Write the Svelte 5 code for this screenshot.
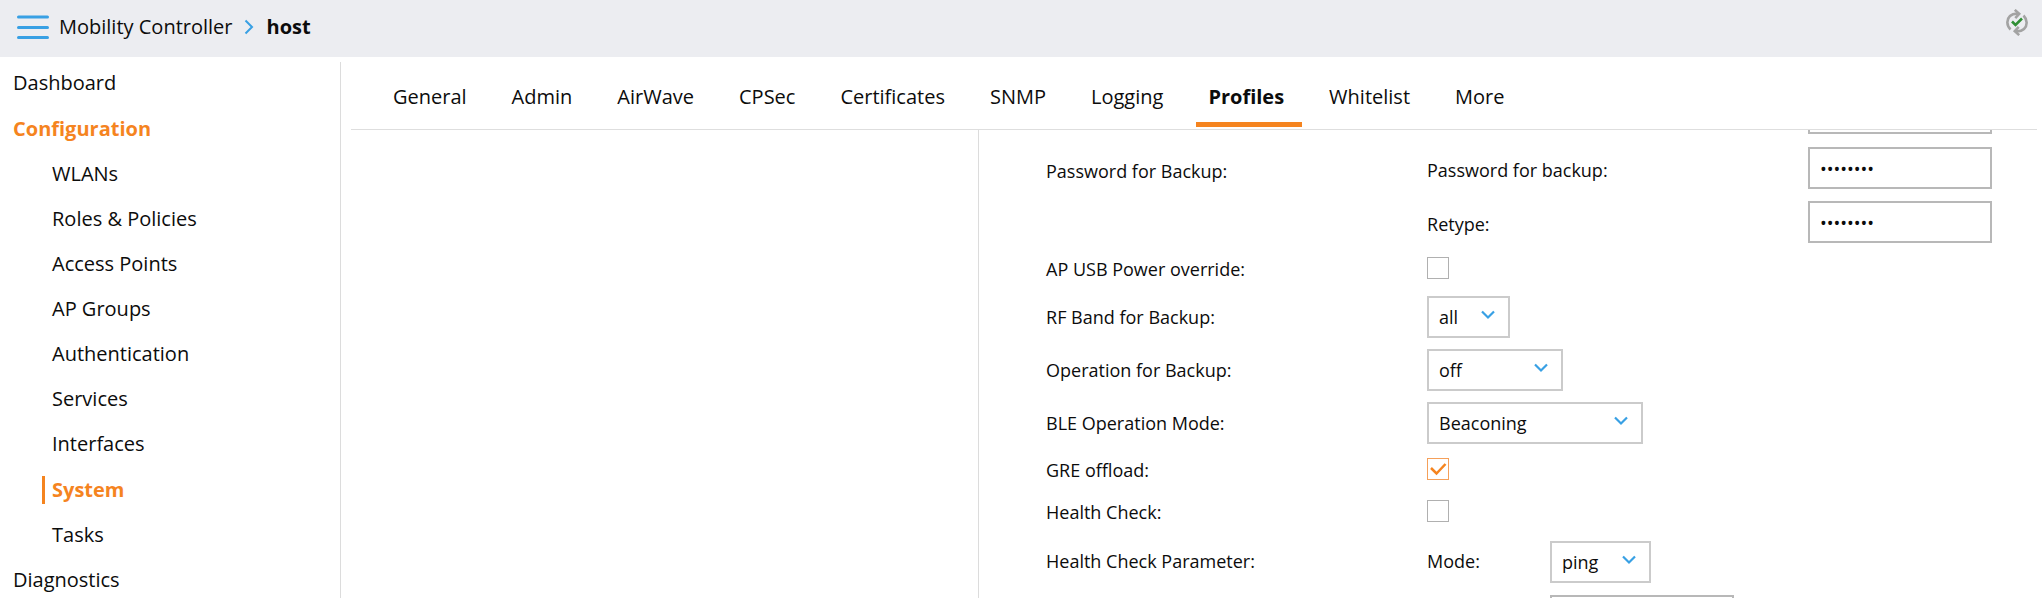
<script>
  const sections = [
    { label: 'Dashboard' },
    { label: 'Configuration', active: true },
    { label: 'WLANs', child: true },
    { label: 'Roles & Policies', child: true },
    { label: 'Access Points', child: true },
    { label: 'AP Groups', child: true },
    { label: 'Authentication', child: true },
    { label: 'Services', child: true },
    { label: 'Interfaces', child: true },
    { label: 'System', child: true, active: true },
    { label: 'Tasks', child: true },
    { label: 'Diagnostics' }
  ];
  const tabs = ['General', 'Admin', 'AirWave', 'CPSec', 'Certificates', 'SNMP', 'Logging', 'Profiles', 'Whitelist', 'More'];
  let current = $state('Profiles');

  const fields = [
    { id: 'usb', label: 'AP USB Power override:', type: 'check', checked: false },
    { id: 'band', label: 'RF Band for Backup:', type: 'select', value: 'all', size: 'short' },
    { id: 'operation', label: 'Operation for Backup:', type: 'select', value: 'off', size: 'medium' },
    { id: 'ble', label: 'BLE Operation Mode:', type: 'select', value: 'Beaconing', size: 'long' },
    { id: 'gre', label: 'GRE offload:', type: 'check', checked: true },
    { id: 'health', label: 'Health Check:', type: 'check', checked: false }
  ];
</script>

<div class="page">
  <header>
    <button class="menu" aria-label="Menu">
      <svg width="34" height="26" viewBox="0 0 34 26" fill="none" stroke="#38a0e4" stroke-width="3" stroke-linecap="round">
        <path d="M2.500 3H31.500M2.500 13.500H31.500M2.500 23.500H31.500" />
      </svg>
    </button>
    <nav class="crumbs" aria-label="Breadcrumb">
      <a href="#controller">Mobility Controller</a>
      <svg width="10" height="16" viewBox="0 0 10 16" fill="none" stroke="#38a0e4" stroke-width="2">
        <path d="M1.500 1.500L8 8L1.500 14.500" />
      </svg>
      <strong>host</strong>
    </nav>
    <button class="sync" aria-label="Synchronize">
      <svg width="22" height="27" viewBox="0 0 22 27" fill="none" stroke="#a3a3a3" stroke-width="2.600">
        <path d="M4.500 20.500C0.500 16.500 0.300 10.500 4 7C6.300 4.900 9 4.300 13 4.800" />
        <path d="M17.500 6.500C21.500 10.500 21.700 16.500 18 20C15.700 22.100 13 22.700 9 22.200" />
        <path d="M8.800 0.900L13.200 4.900L9.300 9.200" />
        <path d="M13.200 26.100L8.800 22.100L12.700 17.800" />
        <path d="M6 12.500L9.500 16L16 9.500" stroke="#2f8f35" />
      </svg>
    </button>
  </header>

  <div class="body">
    <nav class="side" aria-label="Main">
      {#each sections as item}
        <a href="#{item.label}" class:child={item.child} class:active={item.active}><span>{item.label}</span></a>
      {/each}
    </nav>

    <main>
      <div class="tabs" role="tablist">
        {#each tabs as tab}
          <button role="tab" aria-selected={tab === current} class:on={tab === current} onclick={() => (current = tab)}>{tab}</button>
        {/each}
      </div>

      <div class="split">
        <div class="tree"></div>
        <form>
          <div class="row group before">
            <input class="third" type="text" aria-label="Backup value" />
          </div>

          <div class="row group">
            <span class="label">Password for Backup:</span>
            <div class="pair">
              <label for="pw">Password for backup:</label>
              <input id="pw" type="password" value="password" />
              <label for="pw2">Retype:</label>
              <input id="pw2" type="password" value="password" />
            </div>
          </div>

          {#each fields as field}
            <div class="row {field.type}">
              <label for={field.id}>{field.label}</label>
              {#if field.type === 'check'}
                <input id={field.id} type="checkbox" checked={field.checked} />
              {:else}
                <select id={field.id} class={field.size}><option>{field.value}</option></select>
              {/if}
            </div>
          {/each}

          <div class="row group health">
            <span class="label">Health Check Parameter:</span>
            <div class="params">
              <label for="mode">Mode:</label>
              <select id="mode" class="mode"><option>ping</option></select>
              <input class="second" type="text" aria-label="Packet size" />
            </div>
          </div>
        </form>
      </div>
    </main>
  </div>
</div>

<style>
  :global(body) {
    background: #fff;
  }
  .page,
  .page * {
    box-sizing: border-box;
  }
  .page {
    height: 100vh;
    display: flex;
    flex-direction: column;
    overflow: hidden;
    font: 20px/28px 'Open Sans', sans-serif;
    color: #0c0c0c;
  }
  button,
  input,
  select {
    font: inherit;
    color: inherit;
    margin: 0;
  }
  button {
    background: none;
    border: 0;
    padding: 0;
    cursor: pointer;
  }
  a {
    color: inherit;
    text-decoration: none;
  }
  svg {
    display: block;
  }

  header {
    flex: none;
    height: 57px;
    padding: 0 14px 3px 16px;
    display: flex;
    align-items: center;
    background: #ecedf1;
  }
  .crumbs {
    display: flex;
    align-items: center;
    gap: 12px;
    margin-left: 9px;
  }
  .sync {
    margin: 0 0 10px auto;
  }

  .body {
    flex: 1;
    min-height: 0;
    display: flex;
    padding: 5px 5px 0 0;
  }
  .side {
    flex: none;
    width: 341px;
    border-right: 1px solid #dcdcdc;
    overflow: hidden;
  }
  .side a {
    display: flex;
    align-items: center;
    height: 45px;
    padding: 0 0 4px 13px;
  }
  .side .child {
    padding-left: 42px;
  }
  .side .child span {
    padding-left: 7px;
    border-left: 3px solid transparent;
  }
  .side .active {
    margin-top: 1px;
    color: #f5841f;
    font-weight: 700;
  }
  .side .child.active span {
    border-left-color: #f5841f;
  }

  main {
    flex: 1;
    min-width: 0;
    margin-left: 10px;
    display: flex;
    flex-direction: column;
  }
  .tabs {
    flex: none;
    display: flex;
    gap: 15px;
    height: 68px;
    padding: 5px 0 2px 30px;
    border-bottom: 1px solid #dedede;
  }
  .tabs button {
    padding: 4px 18px 0 12px;
    border-bottom: 5px solid transparent;
  }
  .tabs .on {
    font-weight: 700;
    border-bottom-color: #f5841f;
  }

  .split {
    flex: 1;
    min-height: 0;
    display: flex;
  }
  .tree {
    width: 37.25%;
    border-right: 1px solid #dcdcdc;
  }
  form {
    flex: 1;
    padding-left: 67px;
    overflow: hidden;
    font-size: 18px;
    line-height: 24px;
  }
  .row {
    display: grid;
    grid-template-columns: 381fr 610fr;
    align-items: start;
  }
  .pair {
    display: grid;
    grid-template-columns: 381fr 229fr;
    row-gap: 12px;
    align-items: start;
  }
  .params {
    display: grid;
    grid-template-columns: 123px auto;
    justify-content: start;
    justify-items: start;
    row-gap: 12px;
  }
  .group {
    padding: 8px 0 5px;
  }
  .group .label {
    padding-top: 12px;
  }
  .group label {
    padding-top: 11px;
  }
  .health .label,
  .health label {
    padding-top: 8px;
  }
  .before {
    grid-template-columns: 381fr 381fr 229fr;
    margin-top: -38px;
    padding-top: 0;
  }
  .third {
    grid-column: 3;
  }
  .second {
    grid-column: 2;
  }
  .check {
    height: 42px;
    padding-top: 9px;
  }
  .select {
    padding: 6px 0 5px;
  }
  .select label {
    padding-top: 9px;
  }

  input,
  select {
    appearance: none;
    height: 42px;
    border: 2px solid #cbcbcb;
    border-radius: 0;
    background: #fff;
  }
  input {
    width: 184px;
    padding: 2px 10px 0;
    border-color: #b8b8b8;
  }
  select {
    padding: 0 36px 0 10px;
    background: #fff url("data:image/svg+xml,%3Csvg xmlns='http://www.w3.org/2000/svg' width='14' height='10' fill='none' stroke='%2338a0e4' stroke-width='2.200'%3E%3Cpath d='M1 1.500L7 7.500L13 1.500'/%3E%3C/svg%3E") no-repeat right 13px top 12px;
  }
  .short {
    width: 83px;
  }
  .medium {
    width: 136px;
  }
  .long {
    width: 216px;
  }
  .mode {
    width: 101px;
  }
  input[type='checkbox'] {
    width: 22px;
    height: 22px;
    padding: 0;
    border: 1px solid #b0b0b0;
  }
  input[type='checkbox']:checked {
    border-color: #f5a05a;
    background: url("data:image/svg+xml,%3Csvg xmlns='http://www.w3.org/2000/svg' width='20' height='20' fill='none' stroke='%23f5841f' stroke-width='2.500'%3E%3Cpath d='M3 9L8.500 14.500L17.500 5'/%3E%3C/svg%3E") center no-repeat;
  }
</style>
